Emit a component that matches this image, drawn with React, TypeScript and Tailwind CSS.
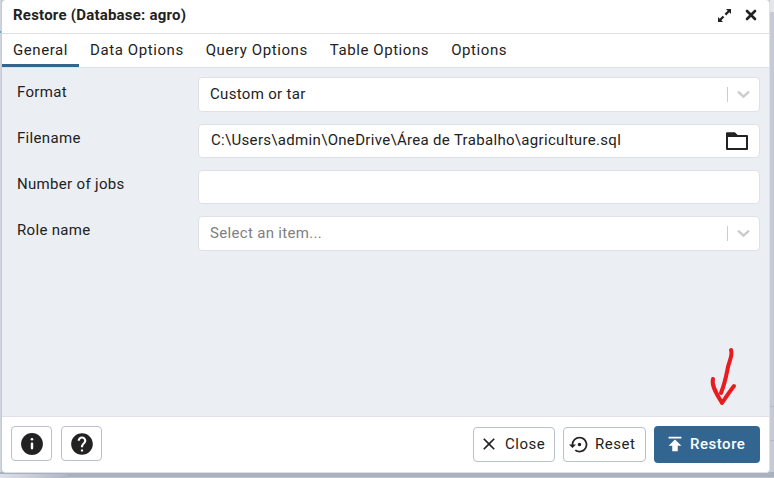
import type { ReactNode } from 'react';
import { MdClose, MdHelp, MdPublish, MdSettingsBackupRestore } from 'react-icons/md';

const tabs = ['General', 'Data Options', 'Query Options', 'Table Options', 'Options'];

function Row({ label, tall = false, children }: { label: string; tall?: boolean; children?: ReactNode }) {
  return (
    <div className="flex h-[35px] items-start tracking-[0.32px]">
      <div className="w-[181px] shrink-0 pt-[3px] leading-[22px]">{label}</div>
      <div className={`flex flex-1 items-center rounded-[4px] border border-[#dde0e6] bg-white pl-[11px] ${tall ? 'h-[35px]' : 'h-[34px]'}`}>{children}</div>
    </div>
  );
}

function SelectEnd() {
  return (
    <div className="ml-auto flex h-full items-center pr-[9px]">
      <div className="h-[15px] w-px bg-[#ccc]" />
      <svg className="ml-[9px]" width="13" height="9" viewBox="0 0 13 9" fill="none" stroke="#ccc" strokeWidth="2.4">
        <path d="M1 1.7 6.5 6.7 12 1.7" />
      </svg>
    </div>
  );
}

export default function App() {
  return (
    <div className="relative flex h-[478px] w-[774px] flex-col overflow-hidden bg-[#c5cad6] pl-[2px] font-['Roboto',sans-serif] text-[15px] tracking-[0.54px] text-[#222]">
      <div className="absolute left-0 top-0 h-[478px] w-px bg-[#d0d4df]" />
      <div className="absolute left-0 top-[31px] h-[2px] w-px bg-[#62a6cf]" />
      <div className="absolute right-0 top-0 h-[12px] w-[4px] bg-[#e4e6ec]" />
      <div className="absolute right-0 top-[12px] h-px w-[4px] bg-[#c5c9d2]" />
      <div className="absolute right-0 top-[406px] h-px w-[4px] bg-[#b1b7c4]" />
      <div className="absolute right-0 top-[440px] h-px w-[4px] bg-[#b1b7c4]" />
      <div className="absolute bottom-0 left-0 h-[6px] w-[774px] bg-[#a9b1be]" />
      <div className="absolute bottom-0 left-0 h-[4px] w-[68px] bg-gradient-to-r from-[#dde0e7] to-[#b0b7c3]" />
      <div className="absolute bottom-0 left-[68px] h-px w-[706px] bg-[#bcc3cd]" />
      <div className="relative flex h-[473px] w-[768px] flex-col overflow-hidden rounded-[4px] border-b border-r border-[#dde0e6] bg-white">
        <header className="flex h-[34px] items-center border-b border-[#dde0e6] pb-[3px] pl-[11px] pr-[12px]">
          <h1 className="text-[15px] font-bold tracking-[0.22px]">Restore (Database: agro)</h1>
          <svg className="ml-auto" width="15" height="15" viewBox="0 0 15 15" fill="#222">
            <path d="M9 1h5v5l-1.7-1.7-3.1 3.1-1.6-1.6 3.1-3.1zM1 9l1.7 1.7 3-3 1.6 1.6-3 3L6 14H1z" />
          </svg>
          <svg className="ml-[13px]" width="12" height="12" viewBox="0 0 12 12" stroke="#222" strokeWidth="2.6" strokeLinecap="round">
            <path d="M2 2 10 10M10 2 2 10" />
          </svg>
        </header>
        <nav className="flex h-[34px] border-b border-[#dde0e6] tracking-[0.58px]">
          {tabs.map((tab, i) => (
            <div key={tab} className={`px-[11px] pt-[5px] leading-[22px] ${i === 0 ? 'border-b-[3px] border-[#326690]' : ''}`}>
              {tab}
            </div>
          ))}
        </nav>
        <main className="flex flex-1 flex-col gap-[11px] bg-[#ebeef3] pl-[15px] pr-[9px] pt-[9px]">
          <div className="flex h-[36px] items-start tracking-[0.32px]">
            <div className="w-[181px] shrink-0 pt-[4px] leading-[22px]">Format</div>
            <div className="flex h-[35px] flex-1 items-center rounded-[4px] border border-[#dde0e6] bg-white pl-[11px]">Custom or tar<SelectEnd /></div>
          </div>
          <Row label="Filename">
            <span className="pb-[2px] pl-px">C:\Users\admin\OneDrive\Área de Trabalho\agriculture.sql</span>
            <svg className="ml-auto mr-[11px]" width="22" height="18" viewBox="0 0 22 18" fill="none" stroke="#222" strokeWidth="2" strokeLinejoin="round">
              <path d="M1 1.5h7.5L11 4h10v13H1z" />
              <path d="M1 1.5h7.5L11 4H1z" fill="#222" />
            </svg>
          </Row>
          <Row label="Number of jobs" />
          <Row label="Role name" tall><span className="text-[#808080]">Select an item...</span><SelectEnd /></Row>
        </main>
        <footer className="flex h-[56px] items-center gap-[9px] border-t border-[#dde0e6] pl-[9px] pr-[9px]">
          <button className="mb-[2px] flex h-[35px] w-[41px] items-center justify-center rounded-[4px] border border-[#bac1cd]">
            <svg width="22" height="22" viewBox="0 0 22 22">
              <circle cx="11" cy="11" r="10.9" fill="#222" />
              <circle cx="11" cy="6.3" r="1.3" fill="white" />
              <rect x="9.8" y="9.4" width="2.4" height="7" rx="1.1" fill="white" />
            </svg>
          </button>
          <button className="mb-[2px] flex h-[35px] w-[41px] items-center justify-center rounded-[4px] border border-[#bac1cd]"><MdHelp className="size-[26px]" /></button>
          <div className="ml-auto flex items-center gap-[8px]">
            <button className="flex h-[35px] w-[82px] items-center rounded-[4px] border border-[#bac1cd] pb-px pl-[5px]"><MdClose className="mr-[6px] size-[20px]" />Close</button>
            <button className="flex h-[35px] w-[83px] items-center rounded-[4px] border border-[#bac1cd] pb-px pl-[5px]"><MdSettingsBackupRestore className="mr-[5px] size-[21px]" />Reset</button>
            <button className="flex h-[37px] w-[106px] items-center rounded-[4px] bg-[#326690] pb-px pl-[10px] font-medium tracking-[0.52px] text-white"><MdPublish className="mr-[4px] size-[22px]" />Restore</button>
          </div>
        </footer>
      </div>
      <svg className="absolute left-[704px] top-[344px]" width="36" height="64" viewBox="704 344 36 64" fill="none" stroke="#e91b1f" strokeWidth="4" strokeLinecap="round" strokeLinejoin="round">
        <path d="M731 350C733 355 729 362 728 367C726 377 725 383 721 393M713 379C711 386 718 396 722 403C726 397 730 391 734 386" />
      </svg>
    </div>
  );
}
